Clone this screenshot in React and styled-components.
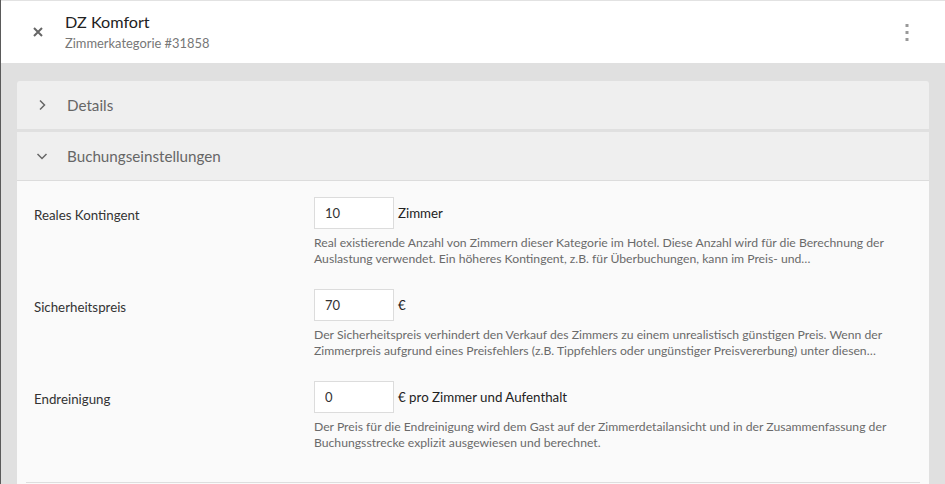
import styled, { createGlobalStyle } from "styled-components";

const GlobalStyle = createGlobalStyle`
  html, body {
    margin: 0;
    padding: 0;
    background: #e0e0e0;
    font-family: "Lato", "Liberation Sans", sans-serif;
  }
  * { box-sizing: border-box; }
`;

const Page = styled.div`
  width: 945px;
  height: 484px;
  overflow: hidden;
  border-left: 1px solid #5a5a5a;
  background: #e0e0e0;
  display: flex;
  flex-direction: column;
`;

const Header = styled.header`
  height: 63px;
  flex: none;
  background: #fff;
  border-top: 1px solid #e2e2e2;
  display: flex;
  align-items: center;
  padding: 0 28px 0 27px;
`;

const IconButton = styled.button`
  border: 0;
  background: none;
  padding: 0;
  width: 20px;
  height: 20px;
  display: flex;
  align-items: center;
  justify-content: center;
  cursor: pointer;
`;

const TitleBlock = styled.div`
  margin-left: 17px;
  flex: 1;
  display: flex;
  flex-direction: column;
  gap: 3px;
  margin-top: -2px;
`;

const Title = styled.div`
  font-size: 16.2px;
  color: #222;
  line-height: 20px;
`;

const Subtitle = styled.div`
  font-size: 12.9px;
  color: #777;
  line-height: 16px;
`;

const Body = styled.main`
  flex: 1;
  padding: 18px 16px 0 16px;
`;

const Card = styled.div`
  border-radius: 3px 3px 0 0;
  overflow: hidden;
`;

const AccordionHeader = styled.div`
  height: 48px;
  background: #efefef;
  display: flex;
  align-items: center;
  padding-left: 16px;
  gap: 16px;
  font-size: 15.2px;
  color: #666;
  border-bottom: ${(p) => (p.$open ? "1px solid #dcdcdc" : "3px solid #e0e0e0")};
  box-sizing: content-box;
`;

const Chevron = styled.span`
  width: 18px;
  height: 18px;
  display: flex;
  align-items: center;
  justify-content: center;
`;

const Content = styled.div`
  background: #fafafa;
  padding: 16px 0 0 0;
  height: 400px;
`;

const Row = styled.div`
  display: grid;
  grid-template-columns: 280px 1fr;
  height: 92px;
  padding-left: 17px;
`;

const Label = styled.div`
  font-size: 13.3px;
  color: #333;
  padding-top: 10px;
`;

const Field = styled.div`
  display: flex;
  flex-direction: column;
`;

const InputLine = styled.div`
  display: flex;
  align-items: center;
  gap: 4px;
`;

const Input = styled.input`
  width: 80px;
  height: 32px;
  border: 1px solid #dcdcdc;
  background: #fff;
  padding: 0 10px;
  font-family: inherit;
  font-size: 13px;
  color: #333;
  outline: none;
`;

const Unit = styled.span`
  font-size: 13.3px;
  color: #222;
`;

const Help = styled.p`
  margin: 6px 0 0;
  width: 600px;
  font-size: 12.2px;
  line-height: 16px;
  color: #6a6a6a;
`;

const Divider = styled.div`
  margin: 9px 9px 0 9px;
  border-top: 1px solid #dedede;
`;

const CloseIcon = () => (
  <svg width="12" height="12" viewBox="0 0 12 12">
    <path d="M2 2 L10 10 M10 2 L2 10" stroke="#666" strokeWidth="2" />
  </svg>
);

const KebabIcon = () => (
  <svg width="6" height="20" viewBox="0 0 6 20">
    <rect x="1.5" y="2" width="3" height="3" fill="#999" />
    <rect x="1.5" y="9" width="3" height="3" fill="#999" />
    <rect x="1.5" y="16" width="3" height="3" fill="#999" />
  </svg>
);

const ChevronIcon = ({ open }) => (
  <svg width="12" height="12" viewBox="0 0 12 12">
    {open ? (
      <path d="M1.5 4 L6 8.5 L10.5 4" fill="none" stroke="#666" strokeWidth="1.5" />
    ) : (
      <path d="M4 1.5 L8.5 6 L4 10.5" fill="none" stroke="#666" strokeWidth="1.5" />
    )}
  </svg>
);

const rows = [
  {
    label: "Reales Kontingent",
    value: "10",
    unit: "Zimmer",
    help: [
      "Real existierende Anzahl von Zimmern dieser Kategorie im Hotel. Diese Anzahl wird für die Berechnung der",
      "Auslastung verwendet. Ein höheres Kontingent, z.B. für Überbuchungen, kann im Preis- und…",
    ],
  },
  {
    label: "Sicherheitspreis",
    value: "70",
    unit: "€",
    help: [
      "Der Sicherheitspreis verhindert den Verkauf des Zimmers zu einem unrealistisch günstigen Preis. Wenn der",
      "Zimmerpreis aufgrund eines Preisfehlers (z.B. Tippfehlers oder ungünstiger Preisvererbung) unter diesen…",
    ],
  },
  {
    label: "Endreinigung",
    value: "0",
    unit: "€ pro Zimmer und Aufenthalt",
    help: [
      "Der Preis für die Endreinigung wird dem Gast auf der Zimmerdetailansicht und in der Zusammenfassung der",
      "Buchungsstrecke explizit ausgewiesen und berechnet.",
    ],
  },
];

export default function App() {
  return (
    <>
      <GlobalStyle />
      <Page>
        <Header>
          <IconButton aria-label="Schließen">
            <CloseIcon />
          </IconButton>
          <TitleBlock>
            <Title>DZ Komfort</Title>
            <Subtitle>Zimmerkategorie #31858</Subtitle>
          </TitleBlock>
          <IconButton aria-label="Menü">
            <KebabIcon />
          </IconButton>
        </Header>
        <Body>
          <Card>
            <AccordionHeader>
              <Chevron>
                <ChevronIcon />
              </Chevron>
              Details
            </AccordionHeader>
            <AccordionHeader $open>
              <Chevron>
                <ChevronIcon open />
              </Chevron>
              Buchungseinstellungen
            </AccordionHeader>
            <Content>
              {rows.map((r) => (
                <Row key={r.label}>
                  <Label>{r.label}</Label>
                  <Field>
                    <InputLine>
                      <Input defaultValue={r.value} />
                      <Unit>{r.unit}</Unit>
                    </InputLine>
                    <Help>
                      {r.help[0]}
                      <br />
                      {r.help[1]}
                    </Help>
                  </Field>
                </Row>
              ))}
              <Divider />
            </Content>
          </Card>
        </Body>
      </Page>
    </>
  );
}
